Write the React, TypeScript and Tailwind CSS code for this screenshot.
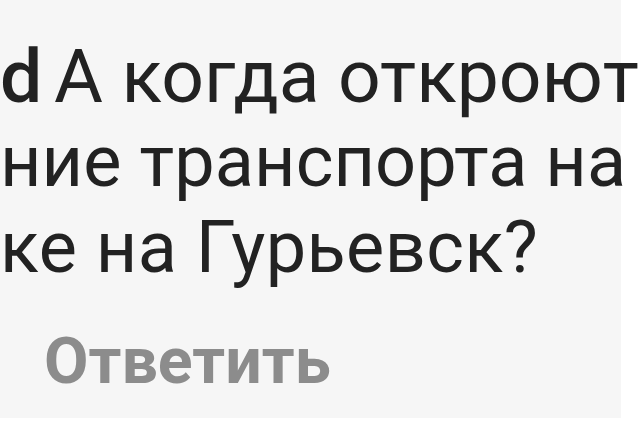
import React from "react";

export default function App() {
  return (
    <div className="w-[640px] h-[426px] bg-white overflow-hidden">
      <div
        className="w-[621px] h-[418px] bg-[#f6f6f6] pt-[33px]"
        style={{ fontFamily: "Roboto, 'Noto Sans', sans-serif" }}
      >
        <div className="leading-[86px] text-[#222222] whitespace-nowrap">
          <div className="text-[75px]">
            <span className="font-medium [word-spacing:-7px]">d </span>А когда откроют
          </div>
          <div className="text-[72px] tracking-[0.1px]">ние транспорта на</div>
          <div className="text-[72px] tracking-[0.45px]">ке на Гурьевск?</div>
        </div>
        <div className="mt-[33px] pl-[44px] text-[64.5px] leading-[74px] font-bold text-[#8c8c8c] whitespace-nowrap">
          Ответить
        </div>
      </div>
    </div>
  );
}
